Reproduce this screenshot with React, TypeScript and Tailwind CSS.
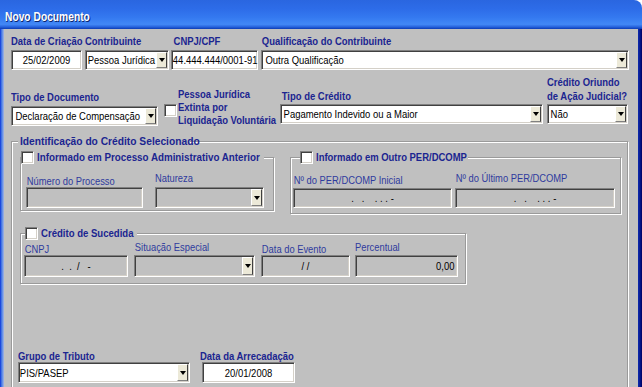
import React from 'react';

type Align = 'left' | 'center' | 'right';

const sunken =
    'border border-t-[#808080] border-l-[#808080] border-b-white border-r-white shadow-[inset_1px_1px_0_#404040,inset_-1px_-1px_0_#d4d0c8]';

const etched = 'min-w-0 border border-[#9a9a9a] shadow-[inset_1px_1px_0_#ffffff,1px_1px_0_#ffffff]';

// the original UI font is narrower than Arial, so text is squeezed horizontally
function Label({ children, className = '' }: { children: React.ReactNode; className?: string }) {
    return (
        <div className={`origin-left scale-x-[0.86] font-bold text-[11px] leading-[12px] text-[#1b2590] whitespace-nowrap ${className}`}>
            {children}
        </div>
    );
}

function SubLabel({ children, className = '' }: { children: React.ReactNode; className?: string }) {
    return (
        <div className={`origin-left scale-x-[0.85] text-[11px] leading-[12px] text-[#2f3b9e] whitespace-nowrap ${className}`}>
            {children}
        </div>
    );
}

function DropButton() {
    return (
        <div className="self-stretch w-[11px] my-[1px] mr-[1px] flex items-center justify-center bg-[#ece9d8] border border-t-white border-l-white border-b-[#808080] border-r-[#404040]">
            <svg width="6" height="4" viewBox="0 0 6 4">
                <path d="M0 0h6L3 4z" fill="#000" />
            </svg>
        </div>
    );
}

interface FieldProps {
    value?: string;
    className?: string;
    align?: Align;
    disabled?: boolean;
    dropdown?: boolean;
    pad?: string;
}

function Field({ value = '', className = '', align = 'left', disabled = false, dropdown = false, pad = 'px-[3px]' }: FieldProps) {
    const alignCls =
        align === 'center' ? 'text-center origin-center' : align === 'right' ? 'text-right origin-right' : 'text-left origin-left';
    return (
        <div className={`flex items-center ${sunken} ${disabled ? 'bg-[#c0c0c0]' : 'bg-white'} ${className}`}>
            <span className={`flex-1 min-w-0 whitespace-pre scale-x-[0.86] text-[11px] leading-[12px] text-black ${pad} ${alignCls}`}>
                {value}
            </span>
            {dropdown && <DropButton />}
        </div>
    );
}

function Checkbox({ className = '' }: { className?: string }) {
    return <div className={`w-[13px] h-[13px] shrink-0 bg-white ${sunken} ${className}`} />;
}

interface GroupTitleProps {
    children: React.ReactNode;
    className?: string;
    width: string;
    scale: string;
}

function GroupTitle({ children, className = '', width, scale }: GroupTitleProps) {
    return (
        <legend className={`flex items-center bg-[#c0c0c0] pr-[3px] ${className}`}>
            <Checkbox />
            <span className={`ml-[3px] origin-left font-bold text-[11px] leading-[13px] text-[#1b2590] whitespace-nowrap ${width} ${scale}`}>
                {children}
            </span>
        </legend>
    );
}

export default function App() {
    return (
        <div className="w-[642px] h-[387px] overflow-hidden bg-white [font-family:'Liberation_Sans',Arial,sans-serif]">
            {/* title bar */}
            <div className="h-[29px] rounded-tr-[8px] pl-[5px] pt-[10px] bg-[linear-gradient(to_bottom,#2a66e0_0%,#2d6ce8_30%,#3479f0_60%,#4288f6_84%,#2662dc_93%,#0c3bb4_100%)]">
                <span className="block origin-left scale-x-[0.82] text-white font-bold text-[12.5px] leading-[15px] [text-shadow:1px_1px_0_#0a246a]">
                    Novo Documento
                </span>
            </div>

            <div className="flex h-[358px]">
                <div className="w-[4px] bg-[linear-gradient(to_right,#0831d9,#3d6fe3,#6e95e6,#a6b8e0)]" />

                <div className="flex-1 bg-[#c0c0c0] pl-[7px] pt-[6px]">
                    {/* row 1 */}
                    <div className="flex items-start">
                        <div className="w-[71px]">
                            <Label>Data de Criação</Label>
                            <Field className="mt-[3px] h-[20px]" value="25/02/2009" align="center" />
                        </div>
                        <div className="w-[84px] ml-[3px]">
                            <Label>Contribuinte</Label>
                            <Field className="mt-[3px] h-[20px]" value="Pessoa Jurídica" pad="px-[2px]" dropdown />
                        </div>
                        <div className="w-[87px] ml-[2px]">
                            <Label className="pl-[3px]">CNPJ/CPF</Label>
                            <Field className="mt-[3px] h-[20px]" value="44.444.444/0001-91" pad="px-[1px]" />
                        </div>
                        <div className="w-[368px] ml-[3px]">
                            <Label className="pl-[1px]">Qualificação do Contribuinte</Label>
                            <Field className="mt-[3px] h-[20px]" value="Outra Qualificação" pad="px-[4px]" dropdown />
                        </div>
                    </div>

                    {/* row 2 */}
                    <div className="flex items-start">
                        <div className="w-[147px] mt-[21px]">
                            <Label>Tipo de Documento</Label>
                            <Field className="mt-[3px] h-[20px]" value="Declaração de Compensação" pad="px-[4px]" dropdown />
                        </div>
                        <Checkbox className="ml-[6px] mt-[34px]" />
                        <Label className="w-[102px] ml-[1px] mt-[18px] leading-[13px]">
                            Pessoa Jurídica
                            <br />
                            Extinta por
                            <br />
                            Liquidação Voluntária
                        </Label>
                        <div className="w-[263px] mt-[20px]">
                            <Label className="pl-[2px]">Tipo de Crédito</Label>
                            <Field className="mt-[2px] h-[20px]" value="Pagamento Indevido ou a Maior" dropdown />
                        </div>
                        <div className="w-[81px] ml-[4px] mt-[5px]">
                            <Label className="leading-[14px]">
                                Crédito Oriundo
                                <br />
                                de Ação Judicial?
                            </Label>
                            <Field className="mt-[1px] h-[20px]" value="Não" dropdown />
                        </div>
                    </div>

                    {/* identificação do crédito */}
                    <fieldset className={`mt-[8px] w-[617px] h-[300px] ${etched}`}>
                        <legend className="ml-[6px] px-[2px] bg-[#c0c0c0]">
                            <span className="block w-[168px] origin-left scale-x-[0.93] font-bold text-[11px] leading-[13px] text-[#1b2590] whitespace-nowrap">
                                Identificação do Crédito Selecionado
                            </span>
                        </legend>

                        <div className="flex items-start mt-[3px]">
                            <fieldset className={`ml-[8px] w-[254px] ${etched}`}>
                                <GroupTitle width="w-[224px]" scale="scale-x-[0.89]">
                                    Informado em Processo Administrativo Anterior
                                </GroupTitle>
                                <div className="flex items-start pb-[2px]">
                                    <div className="ml-[5px] w-[117px] mt-[11px]">
                                        <SubLabel className="pl-[1px]">Número do Processo</SubLabel>
                                        <Field className="h-[21px]" disabled />
                                    </div>
                                    <div className="ml-[12px] w-[109px] mt-[8px]">
                                        <SubLabel>Natureza</SubLabel>
                                        <Field className="mt-[3px] h-[21px]" disabled dropdown />
                                    </div>
                                </div>
                            </fieldset>

                            <fieldset className={`ml-[16px] w-[331px] ${etched}`}>
                                <GroupTitle className="ml-[9px]" width="w-[149px]" scale="scale-x-[0.86]">
                                    Informado em Outro PER/DCOMP
                                </GroupTitle>
                                <div className="flex items-start pb-[5px]">
                                    <div className="ml-[2px] w-[159px] mt-[10px]">
                                        <SubLabel className="pl-[1px]">Nº do PER/DCOMP Inicial</SubLabel>
                                        <Field className="mt-[2px] h-[20px]" value={'.   .    . . . -'} align="center" disabled />
                                    </div>
                                    <div className="ml-[3px] w-[160px] mt-[8px]">
                                        <SubLabel className="pl-[1px]">Nº do Último PER/DCOMP</SubLabel>
                                        <Field className="mt-[4px] h-[20px]" value={'.   .    . . . -'} align="center" disabled />
                                    </div>
                                </div>
                            </fieldset>
                        </div>

                        <fieldset className={`ml-[8px] mt-[13px] w-[446px] ${etched}`}>
                            <GroupTitle className="ml-[4px]" width="w-[93px]" scale="scale-x-[0.87]">
                                Crédito de Sucedida
                            </GroupTitle>
                            <div className="flex items-start pb-[6px]">
                                <div className="ml-[3px] w-[104px] mt-[3px]">
                                    <SubLabel className="pl-[1px]">CNPJ</SubLabel>
                                    <Field className="h-[22px]" value={'.  .  /   -'} align="center" disabled />
                                </div>
                                <div className="ml-[6px] w-[121px] mt-[1px]">
                                    <SubLabel className="pl-[1px]">Situação Especial</SubLabel>
                                    <Field className="mt-[2px] h-[22px]" disabled dropdown />
                                </div>
                                <div className="ml-[6px] w-[89px] mt-[3px]">
                                    <SubLabel className="pl-[1px]">Data do Evento</SubLabel>
                                    <Field className="h-[22px]" value="/ /" align="center" disabled />
                                </div>
                                <div className="ml-[5px] w-[103px] mt-[1px]">
                                    <SubLabel>Percentual</SubLabel>
                                    <Field className="mt-[2px] h-[22px]" value="0,00" align="right" disabled />
                                </div>
                            </div>
                        </fieldset>

                        <div className="flex items-start mt-[66px]">
                            <div className="ml-[6px] w-[172px]">
                                <Label className="leading-[11px]">Grupo de Tributo</Label>
                                <Field className="h-[21px]" value="PIS/PASEP" pad="px-[1px]" dropdown />
                            </div>
                            <div className="ml-[12px] w-[93px]">
                                <Label className="leading-[11px] -ml-[2px]">Data da Arrecadação</Label>
                                <Field className="h-[21px]" value="20/01/2008" align="center" />
                            </div>
                        </div>
                    </fieldset>
                </div>

                <div className="w-[4px] bg-[linear-gradient(to_right,#0c2ab0,#0a1f98,#001080,#000060)]" />
            </div>
        </div>
    );
}
